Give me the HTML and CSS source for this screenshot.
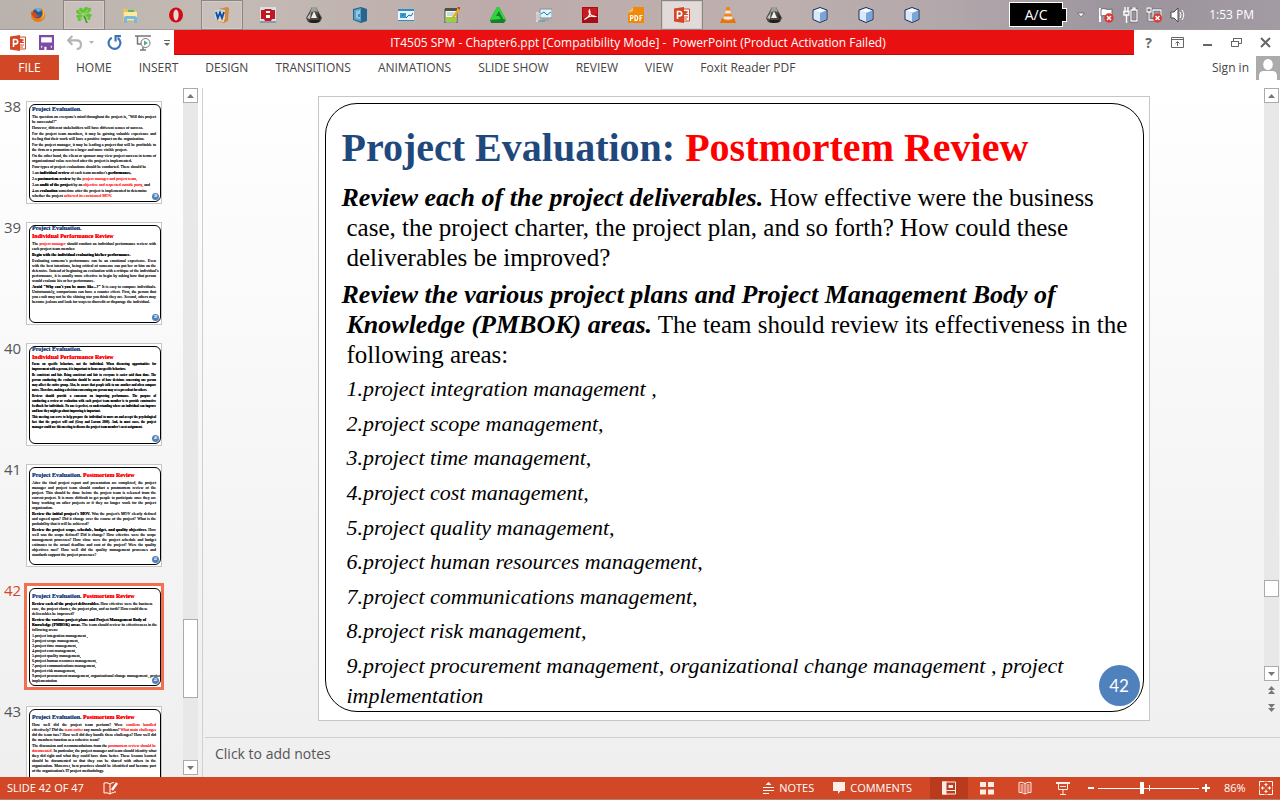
FILE: index.html
```html
<!DOCTYPE html>
<html lang="en">
<head>
<meta charset="utf-8">
<title>IT4505 SPM - Chapter6.ppt</title>
<link rel="stylesheet" href="styles.css">
</head>
<body>
<svg width="0" height="0" class="defs" aria-hidden="true">
  <defs>
    <symbol id="cube" viewBox="0 0 16 16"><path d="M8 .5 15 3v9.500L8 15.500 1 12.500V3Z" fill="#a9c8ec" stroke="#1c2c55"/><path d="M1.800 3.500 8 6v8.700L1.800 12Z" fill="#d9e9f8"/><path d="M14.200 3.500 8 6v8.700L14.200 12Z" fill="#7ba5d6"/><path d="M8 1.300 14 3.400 8 5.800 2 3.400Z" fill="#f4faff"/></symbol>
    <symbol id="tri" viewBox="0 0 16 16"><path d="M6 0h4l6 11-2 4q-6 2-12 0l-2-4Z" fill="#4a4946"/><path d="M6 0h4l2 5-4-1-4 2Z" fill="#a19f9a"/><path d="M8 4 5 11h6Z" fill="#f2f0eb"/><path d="M1 11l4-6-1 7Z" fill="#c4c1bb"/><path d="M4 13h8l2-1-1 3q-5 2-10 0Z" fill="#1f1e1c"/><path d="M12 6l3 5-2 1Z" fill="#222"/></symbol>
    <symbol id="ppt" viewBox="0 0 16 16"><path d="M8 2h7.500v12H8Z" fill="#fff" stroke="#d24726"/><path d="M10 5h4M10 7.500h4M10 10h4M10 12h3" stroke="#d24726"/><circle cx="11" cy="5.500" r="1.800" fill="#d24726"/><path d="M0 1.500 10 0v16L0 14.500Z" fill="#d24726"/><path d="M3.500 12V4.500h2a2.200 2.200 0 0 1 0 4.400h-2" fill="none" stroke="#fff" stroke-width="1.600"/></symbol>
    <symbol id="up" viewBox="0 0 7 4"><path d="M0 4 3.500 0 7 4Z" fill="currentColor"/></symbol>
    <symbol id="down" viewBox="0 0 7 4"><path d="M0 0h7L3.500 4Z" fill="currentColor"/></symbol>
  </defs>
</svg>

<header class="taskbar">
  <nav class="apps" aria-label="Running applications">
    <button aria-label="Firefox"><svg viewBox="0 0 16 16"><circle cx="8" cy="8" r="7" fill="#e8781c"/><circle cx="7.500" cy="6.500" r="4.800" fill="#245a9c"/><path d="M5 2c2-2 6-1 6 2L8 5Z" fill="#62b4e8"/><path d="M1 4c0 6 5 8 9 5l-3-1-2-3-3 1Z" fill="#d9480f"/><path d="M13 2c3 4 1 11-5 11 4 0 6-5 5-11Z" fill="#ffc933"/></svg></button>
    <button class="on" aria-label="Clover"><svg viewBox="0 0 16 16"><path d="M7 7Q1 8 0 5q0-3 3-2 0-3 3-2 2 2 1 6ZM8 7Q6 2 9 0q2-1 3 1 4-1 3 2-1 3-7 4ZM8 8q6-3 8 0 0 2-2 2 1 3-1 3-3-1-5-5ZM7 8q-1 6-4 6-2 0-1-3-3-1-1-3 2-1 6 0Z" fill="#63c436"/><path d="M7.500 7.500 11 16" stroke="#3f9a1e" stroke-width="1.600"/><path d="M3 4l9 7M12 3 4 12" stroke="#a9e780" stroke-width=".8"/></svg></button>
    <button aria-label="File Explorer"><svg viewBox="0 0 16 16"><path d="M1 2h5l1 1h7v11H1Z" fill="#e8c45c"/><path d="M2 5h13v8H2Z" fill="#fbe9a4"/><path d="M6 3h6v2H6Z" fill="#5cb85c"/><path d="M2 16V11q0-2 2-2h8q3 0 3 2v5h-3v-4H5v4Z" fill="#75b9e6"/></svg></button>
    <button aria-label="Opera"><svg viewBox="0 0 16 16"><ellipse cx="8" cy="8" rx="7" ry="7.500" fill="#d40b12"/><ellipse cx="8" cy="8" rx="2.600" ry="5.600" fill="#e5d9d9"/></svg></button>
    <button class="on" aria-label="Word"><svg viewBox="0 0 16 16"><path d="m4 2 9-2 2 1-1 13-4 2-7-2Z" fill="#d6893d"/><path d="m4 2 7 1-1 12-7-1Z" fill="#f4d5a2"/><path d="M1 3h10v9H1Z" fill="#bcd9ef"/><path d="m2 5 1.800 6L6 5.500 8 11l2-6" fill="none" stroke="#174a92" stroke-width="1.800"/></svg></button>
    <button aria-label="Dictionary"><svg viewBox="0 0 16 16"><path d="M0 0h16v14H0Z" fill="#d5e0e9"/><path d="M1 3h3l1-1h6l1 1h3v9h-3l-1 2H5l-1-2H1Z" fill="#c5151e"/><path d="M6 4h4v2H6Zm0 4h4v3H6Z" fill="#fff"/><path d="M0 14h16v2H0Z" fill="#8d9aa5"/></svg></button>
    <button aria-label="Disk tool"><svg><use href="#tri"/></svg></button>
    <button aria-label="Cabinet"><svg viewBox="0 0 16 16"><path d="m1 2 8-2 6 2v12l-6 2-8-3Z" fill="#28658e"/><path d="m2 3 7-2v13.500L2 12.500Z" fill="#5ba0c6"/><path d="m4 4 4-1v9L4 11Z" fill="#8fc9e4"/><path d="M7 7v3" stroke="#174562"/></svg></button>
    <button aria-label="Monitor"><svg viewBox="0 0 16 16"><path d="M0 2h16v12H0Z" fill="#e9f5fc"/><path d="M0 2h16v2H0Z" fill="#2e8dc4"/><path d="M2 6h6v5H2Z" fill="#3a9bd0"/><path d="m8 11 3-3 2 1 2-3M4 9l2-2" stroke="#226e9c" fill="none"/><path d="M0 13.500h16" stroke="#2e8dc4"/></svg></button>
    <button aria-label="Notepad"><svg viewBox="0 0 16 16"><path d="M1 2h12v14H1Z" fill="#f9faf5" stroke="#475147"/><path d="M1 1h12v3H1Z" fill="#495249"/><path d="M2 10h10v5H2Z" fill="#97cf45"/><path d="M3 6h7M3 8h6" stroke="#8bb" /><path d="M15 2 8 12" stroke="#e6ac21" stroke-width="2.500"/><path d="m14 0 2 2" stroke="#c33" stroke-width="2"/></svg></button>
    <button aria-label="Green triangle"><svg viewBox="0 0 16 16"><path d="M7 0h2l7 13-2 3H1l-1-3Z" fill="#16812a"/><path d="M7 0 0 13l11-1-2-3H6l3-5 4 8 3 1L9 0Z" fill="#2bd73a"/></svg></button>
    <button aria-label="Performance"><svg viewBox="0 0 16 16"><path d="M4 2h12v9H4Z" fill="#e9edef" stroke="#85949d"/><path d="M5 3h10v7H5Z" fill="#dff5ff"/><path d="m5 7 3-2 3 3 4-3" stroke="#197fa8" fill="none"/><path d="M7 12h6v2H7Z" fill="#9da6ab"/><path d="M1 5v10M0 6h3v8H0" stroke="#e1e6e8" fill="none"/><path d="M2 14h7" stroke="#3a9"/></svg></button>
    <button aria-label="Adobe Reader"><svg viewBox="0 0 16 16"><path d="M0 0h16v16H0Z" fill="#a80d11"/><path d="M1 1h14v6L1 11Z" fill="#ca1c20"/><path d="M2.500 12.500C7 11 9 6 7.500 3 6 5 9 10.500 13.500 9.500 10 8 5 10 2.500 12.500Z" fill="none" stroke="#fff" stroke-width="1.200"/></svg></button>
    <button aria-label="PDF viewer"><svg viewBox="0 0 16 16"><path d="M5 0h11v16H0V6Z" fill="#f08a0b"/><path d="M5 0v4L0 6Z" fill="#fac26d"/><path d="M2.500 14V8.500h1.200a1.300 1.300 0 0 1 0 2.800H2.500M7 8.500v5h.7q2 0 2-2.500t-2-2.500ZM12 14V8.500h2.500M12 11h2" stroke="#fff" fill="none" stroke-width="1.200"/></svg></button>
    <button class="on current" aria-label="PowerPoint"><svg><use href="#ppt"/></svg></button>
    <button aria-label="VLC"><svg viewBox="0 0 16 16"><path d="M2 11h12l2 5H0Z" fill="#e5750d"/><path d="M6.500 0h3L13 13q-5 2-10 0Z" fill="#f08219"/><path d="M5.700 3.500h4.600l.8 3H4.900ZM4 9.500h8l.6 2.200q-4.600 2-9.200 0Z" fill="#eee9e4"/></svg></button>
    <button aria-label="Disk tool 2"><svg><use href="#tri"/></svg></button>
    <button aria-label="VirtualBox"><svg><use href="#cube"/></svg></button>
    <button aria-label="VirtualBox 2"><svg><use href="#cube"/></svg></button>
    <button aria-label="VirtualBox 3"><svg><use href="#cube"/></svg></button>
  </nav>
  <div class="tray">
    <span class="battery">A/C</span>
    <svg class="s8" viewBox="0 0 8 6"><path d="M.5 1h7L4 4.800Z" fill="#fff" stroke="#555" stroke-width=".7"/></svg>
    <svg class="s16" viewBox="0 0 16 16"><path d="M2 1v14" stroke="#fff" stroke-width="2"/><path d="M3 2q3-1 5 0t6 0v7q-4 1-6 0t-5 0Z" fill="#fff" stroke="#555" stroke-width=".8"/><circle cx="11" cy="11" r="4.700" fill="#d83a33"/><path d="m9 9 4 4m0-4-4 4" stroke="#fff" stroke-width="1.500"/></svg>
    <svg class="s16" viewBox="0 0 16 16"><path d="M3 0v4M6 0v4M1 4.500h7M2 4v4h5V4M4.500 8v8" stroke="#fff" stroke-width="1.400" fill="none"/><path d="M9 3h6v11H9Zm2-2h2v2h-2Z" fill="none" stroke="#4d4949" stroke-width="2.400"/><path d="M9 3h6v11H9Zm2-2h2v2h-2Z" fill="none" stroke="#fff" stroke-width="1.400"/></svg>
    <svg class="s16" viewBox="0 0 16 16"><path d="M1 1h4v4H1Zm2 4v8h5M7 3h8v7H7Z" fill="none" stroke="#4d4949" stroke-width="2.400"/><path d="M1 1h4v4H1Zm2 4v8h5M7 3h8v7H7Z" fill="none" stroke="#fff" stroke-width="1.300"/><circle cx="11.500" cy="11" r="4.500" fill="#d83a33"/><path d="m9.500 9 4 4m0-4-4 4" stroke="#fff" stroke-width="1.500"/></svg>
    <svg class="s16" viewBox="0 0 16 16"><path d="M1 5h3l4-4v14l-4-4H1Z" fill="#fff" stroke="#4d4949"/><path d="M10 5q2 3 0 6M12 3q3.500 5 0 10" stroke="#fff" fill="none"/></svg>
    <time>1:53 PM</time>
  </div>
</header>

<div class="titlebar">
  <div class="quick">
    <svg class="s16" role="img" aria-label="PowerPoint"><use href="#ppt"/></svg>
    <button aria-label="Save"><svg class="s14" viewBox="0 0 14 14"><path d="M1 1h12v12H1Z" fill="none" stroke="#7d4aa5" stroke-width="2"/><path d="M1 7h12v3H1ZM3 10h8v4H3Z" fill="#7d4aa5"/><path d="M5 11h2v3H5Z" fill="#fff"/></svg></button>
    <button class="pair" aria-label="Undo"><svg class="s14" viewBox="0 0 14 14"><path d="M5 1 1 5l4 4M1.500 5H9q4 0 4 4t-4 4" fill="none" stroke="#b3b3b3" stroke-width="2"/></svg><svg class="caret" color="#b3b3b3"><use href="#down"/></svg></button>
    <button aria-label="Repeat"><svg class="s14" viewBox="0 0 14 14"><path d="M4.500 2.500A5.500 5.500 0 1 0 10 2.800" fill="none" stroke="#3b73b9" stroke-width="2"/><path d="M7 0h6v2H9v4H7Z" fill="#3b73b9"/></svg></button>
    <button aria-label="Start slide show"><svg class="s16" viewBox="0 0 16 16"><path d="M0 1h16M2.500 1v8H7M5 15h6M8 12v3" stroke="#777" stroke-width="1.500" fill="none"/><circle cx="10.500" cy="8" r="4.500" fill="#fff" stroke="#777"/><path d="M9 5.500v5L13 8Z" fill="#5aa883"/></svg></button>
    <button aria-label="Customize toolbar"><svg class="tiny" viewBox="0 0 6 6"><path d="M0 .5h6" stroke="#666"/><path d="M0 3h6L3 6Z" fill="#666"/></svg></button>
  </div>
  <h1>IT4505 SPM - Chapter6.ppt [Compatibility Mode] -&nbsp; PowerPoint (Product Activation Failed)</h1>
  <div class="win">
    <button aria-label="Help"><b>?</b></button>
    <button aria-label="Ribbon options"><svg viewBox="0 0 13 11"><path d="M.5.500h12v10H.5ZM1 2.500h11" fill="none" stroke="#666"/><path d="M6.500 9V5M4.500 6.500l2-2 2 2" stroke="#666" fill="none"/></svg></button>
    <button aria-label="Minimize"><svg viewBox="0 0 13 11"><path d="M2 8h9" stroke="#666" stroke-width="2"/></svg></button>
    <button aria-label="Restore"><svg viewBox="0 0 13 11"><path d="M1.500 4.500h7v5h-7ZM1 4.500h8M3.500 4V1.500h8v5H9M3 1.500h9" fill="none" stroke="#666"/></svg></button>
    <button aria-label="Close"><svg viewBox="0 0 13 11"><path d="m2 1 9 9m0-9-9 9" stroke="#666" stroke-width="2"/></svg></button>
  </div>
</div>

<nav class="ribbon">
  <button class="file">FILE</button>
  <div class="tabs"><button>HOME</button><button>INSERT</button><button>DESIGN</button><button>TRANSITIONS</button><button>ANIMATIONS</button><button>SLIDE SHOW</button><button>REVIEW</button><button>VIEW</button><button>Foxit Reader PDF</button></div>
  <a class="signin" href="#">Sign in</a>
  <svg class="avatar" viewBox="0 0 24 24"><path d="M0 0h24v24H0Z" fill="#ababab"/><ellipse cx="12" cy="8.500" rx="4.800" ry="5.500" fill="#fff"/><path d="M3 24v-4q0-5 5-5h8q5 0 5 5v4Z" fill="#fff"/></svg>
</nav>

<main>
  <aside>
    <ol class="thumbs">
      <li><span class="num">38</span><div class="thumb"><div class="mini high">
        <h3>Project Evaluation.</h3>
        <p><span>The question on everyone's mind throughout the project is, "Will this project</span><span>be successful?"</span></p>
        <p><span>However, different stakeholders will have different senses of success.</span></p>
        <p><span>For the project team members, it may be gaining valuable experience and</span><span>feeling that their work will have a positive impact on the organization.</span></p>
        <p><span>For the project manager, it may be leading a project that will be profitable to</span><span>the firm or a promotion to a larger and more visible project.</span></p>
        <p><span>On the other hand, the client or sponsor may view project success in terms of</span><span>organizational value received after the project is implemented.</span></p>
        <p><span>Four types of project evaluations should be conducted. There should be</span></p>
        <p><span>1.an <b>individual review</b> of each team member's <b>performance,</b></span></p>
        <p><span>2.a <b>postmortem review</b> by the <em>project manager and project team,</em></span></p>
        <p><span>3.an <b>audit of the project</b> by an <em>objective and respected outside party,</em> and</span></p>
        <p><span class="left-end">4.an <b>evaluation</b> sometime after the project is implemented to determine</span><span>whether the project <em>achieved its envisioned MOV.</em></span></p>
        <i class="dot">38</i></div></div></li>
      <li><span class="num">39</span><div class="thumb"><div class="mini top">
        <h3>Project Evaluation.<br><em>Individual Performance Review</em></h3>
        <p><span>The <em>project manager</em> should conduct an individual performance review with</span><span>each project team member.</span></p>
        <p><span><b>Begin with the individual evaluating his/her performance.</b></span></p>
        <p><span>Evaluating someone's performance can be an emotional experience. Even</span><span>with the best intentions, being critical of someone can put her or him on the</span><span>defensive. Instead of beginning an evaluation with a critique of the individual's</span><span>performance, it is usually more effective to begin by asking how that person</span><span>would evaluate his or her performance.</span></p>
        <p><span><b>Avoid "Why can't you be more like...?"</b> It is easy to compare individuals.</span><span>Unfortunately, comparisons can have a counter effect. First, the person that</span><span>you exalt may not be the shining star you think they are. Second, others may</span><span>become jealous and look for ways to discredit or disparage the individual.</span></p>
        <i class="dot">39</i></div></div></li>
      <li><span class="num">40</span><div class="thumb"><div class="mini top fine">
        <h3>Project Evaluation.<br><em>Individual Performance Review</em></h3>
        <p><span>Focus on specific behaviors, not the individual. When discussing opportunities for</span><span>improvement with a person, it is important to focus on specific behaviors.</span></p>
        <p><span>Be consistent and fair. Being consistent and fair to everyone is easier said than done. The</span><span>person conducting the evaluation should be aware of how decisions concerning one person</span><span>may affect the entire group. Also, be aware that people talk to one another and often compare</span><span>notes. Therefore, making a decision concerning one person may set a precedent for others.</span></p>
        <p><span>Reviews should provide a consensus on improving performance. The purpose of</span><span>conducting a review or evaluation with each project team member is to provide constructive</span><span>feedback for individuals. No one is perfect, so understanding where an individual can improve</span><span>and how they might go about improving is important.</span></p>
        <p><span>This meeting can serve to help prepare the individual to move on and accept the psychological</span><span>fact that the project will end (Gray and Larson 2000). And, in most cases, the project</span><span>manager could use this meeting to discuss the project team member's next assignment.</span></p>
        <i class="dot">40</i></div></div></li>
      <li><span class="num">41</span><div class="thumb"><div class="mini">
        <h3>Project Evaluation. <em>Postmortem Review</em></h3>
        <p><span>After the final project report and presentation are completed, the project</span><span>manager and project team should conduct a postmortem review of the</span><span>project. This should be done before the project team is released from the</span><span>current project. It is more difficult to get people to participate once they are</span><span>busy working on other projects or if they no longer work for the project</span><span>organization.</span></p>
        <p><span><b>Review the initial project's MOV.</b> Was the project's MOV clearly defined</span><span>and agreed upon? Did it change over the course of the project? What is the</span><span>probability that it will be achieved?</span></p>
        <p><span><b>Review the project scope, schedule, budget, and quality objectives.</b> How</span><span>well was the scope defined? Did it change? How effective were the scope</span><span>management processes? How close were the project schedule and budget</span><span>estimates to the actual deadline and cost of the project? Were the quality</span><span>objectives met? How well did the quality management processes and</span><span>standards support the project processes?</span></p>
        <i class="dot">41</i></div></div></li>
      <li class="selected"><span class="num">42</span><div class="thumb"><div class="mini loose">
        <h3>Project Evaluation. <em>Postmortem Review</em></h3>
        <p class="rag"><span><b>Review each of the project deliverables.</b> How effective were the business</span><span>case, the project charter, the project plan, and so forth? How could these</span><span>deliverables be improved?</span></p>
        <p class="rag"><span><b>Review the various project plans and Project Management Body of</b></span><span><b>Knowledge (PMBOK) areas.</b> The team should review its effectiveness in the</span><span>following areas:</span></p>
        <p><span>1.project integration management ,</span></p><p><span>2.project scope management,</span></p><p><span>3.project time management,</span></p><p><span>4.project cost management,</span></p><p><span>5.project quality management,</span></p><p><span>6.project human resources management,</span></p><p><span>7.project communications management,</span></p><p><span>8.project risk management,</span></p>
        <p class="last"><span class="left-end">9.project procurement management, organizational change management , project</span><span>implementation</span></p>
        <i class="dot">42</i></div></div></li>
      <li><span class="num">43</span><div class="thumb"><div class="mini">
        <h3>Project Evaluation. <em>Postmortem Review</em></h3>
        <p class="light"><span><b>How well did the project team perform?</b> Were <em>conflicts handled</em></span><span><b>effectively?</b> Did the <em>team suffer</em> any morale problems? <em>What main challenges</em></span><span>did the team face? How well did they handle these challenges? How well did</span><span>the members function as a cohesive team?</span></p>
        <p class="light"><span>The discussion and recommendations from the <em>postmortem review should be</em></span><span><em>documented.</em> In particular, the project manager and team should identify what</span><span>they did right and what they could have done better. These lessons learned</span><span>should be documented so that they can be shared with others in the</span><span>organization. Moreover, best practices should be identified and become part</span><span>of the organization's IT project methodology.</span></p>
        </div></div></li>
    </ol>
    <div class="scroll left"><button aria-label="Scroll up"><svg><use href="#up"/></svg></button><div class="track"><i class="knob"></i></div><button aria-label="Scroll down"><svg><use href="#down"/></svg></button></div>
  </aside>

  <section class="editor">
    <div class="stage">
      <article class="slide"><div class="frame">
        <h2>Project Evaluation: <em>Postmortem Review</em></h2>
        <p><b>Review each of the project deliverables.</b> How effective were the business<br>case, the project charter, the project plan, and so forth? How could these<br>deliverables be improved?</p>
        <p><b>Review the various project plans and Project Management Body of<br>Knowledge (PMBOK) areas.</b> The team should review its effectiveness in the<br>following areas:</p>
        <ul>
          <li>1.project integration management ,</li><li>2.project scope management,</li><li>3.project time management,</li><li>4.project cost management,</li><li>5.project quality management,</li><li>6.project human resources management,</li><li>7.project communications management,</li><li>8.project risk management,</li><li>9.project procurement management, organizational change management , project<br>implementation</li>
        </ul>
        <span class="page">42</span>
      </div></article>
      <div class="scroll right"><button aria-label="Previous"><svg><use href="#up"/></svg></button><div class="track"><i class="knob"></i></div><button aria-label="Next"><svg><use href="#down"/></svg></button>
        <button class="jump" aria-label="Previous slide"><svg><use href="#up"/></svg><svg><use href="#up"/></svg></button><button class="jump" aria-label="Next slide"><svg><use href="#down"/></svg><svg><use href="#down"/></svg></button></div>
    </div>
    <div class="notes">Click to add notes</div>
  </section>
</main>

<footer>
  <span>SLIDE 42 OF 47</span>
  <button class="spell" aria-label="Spelling"><svg class="s16" viewBox="0 0 16 14"><path d="M7 13V3Q4 1 1 2v10q3-1 6 1 2-1.500 4-1.500M7 3q2-1.500 4-1.500M12 12v-2" fill="none" stroke="#fff"/><path d="m9 9 5-7" stroke="#fff" stroke-width="2.400"/></svg></button>
  <div class="tools">
    <button><svg class="s11" viewBox="0 0 11 12"><path d="M0 5.500h11M0 8.500h11M0 11.500h6" stroke="#fff"/><path d="m5.500 0 3 3h-6Z" fill="#fff"/></svg>NOTES</button>
    <button><svg class="s12" viewBox="0 0 12 12"><path d="M0 0h12v9H7.500L5 12V9H0Z" fill="#fdeee9"/></svg>COMMENTS</button>
  </div>
  <div class="views">
    <button class="active" aria-label="Normal"><svg viewBox="0 0 14 14"><path d="M.5 1h13v12H.5ZM4.500 9.500h9" fill="none" stroke="#fdeee9"/><path d="M0 .5h4.500v13H0ZM6.500 4H11v3H6.500Z" fill="#fdeee9"/></svg></button>
    <button aria-label="Slide sorter"><svg viewBox="0 0 14 14"><path d="M0 1h6v5H0Zm8 0h6v5H8ZM0 8.500h6v5H0Zm8 0h6v5H8Z" fill="#fdeee9"/></svg></button>
    <button aria-label="Reading view"><svg viewBox="0 0 14 14"><path d="M7 2.500Q4 .5 1 1.500v10q3-.5 6 1.500 3-2 6-1.500v-10q-3-1-6 1ZM7 2v11M2.500 4H5.500M2.500 6H5.500M2.500 8H5.500M2.500 10H5.500M8.500 4H11.500M8.500 6H11.500M8.500 8H11.500M8.500 10H11.500" fill="none" stroke="#fdeee9"/></svg></button>
    <button aria-label="Slide show"><svg viewBox="0 0 14 14"><path d="M0 2h14" stroke="#fdeee9" stroke-width="2"/><path d="M2.500 3v5.500h9V3M4 5.500h6M7 9v4M4 13.500h6" fill="none" stroke="#fdeee9"/></svg></button>
  </div>
  <div class="zoom">
    <button aria-label="Zoom out"><svg viewBox="0 0 8 8"><path d="M1 4h6" stroke="#fff" stroke-width="2"/></svg></button>
    <input type="range" min="0" max="100" value="43" aria-label="Zoom">
    <button aria-label="Zoom in"><svg viewBox="0 0 8 8"><path d="M0 4h8M4 0v8" stroke="#fff" stroke-width="2"/></svg></button>
  </div>
  <span class="pct">86%</span>
  <button class="fit" aria-label="Fit slide"><svg viewBox="0 0 14 14"><path d="M.5.500h13v13H.5Z" fill="none" stroke="#fff" stroke-dasharray="5 1 1 1 5 0"/><path d="M7 2v3.500M7 8.500V12M2 7h3.500M8.500 7H12M5.500 3.500h3M5.500 10.500h3M3.500 5.500v3M10.500 5.500v3" stroke="#fff"/></svg></button>
</footer>
</body>
</html>
```
FILE: styles.css
```css
* { box-sizing: border-box; }
body { margin: 0; height: 100vh; display: flex; flex-direction: column; overflow: hidden; font: 12px/16px "Open Sans", "Noto Sans", sans-serif; color: #444; background: #fff; }
button { font: inherit; color: inherit; background: none; border: 0; padding: 0; display: flex; align-items: center; justify-content: center; }
svg { display: block; flex: none; }
h1, h2, h3, p, ul, ol { margin: 0; padding: 0; }
em { color: #f00; font-style: inherit; }
.defs { position: absolute; }
.s16 { width: 16px; height: 16px; }
.s14 { width: 15px; height: 15px; }
.s12 { width: 12px; height: 12px; }
.s11 { width: 11px; height: 12px; }
.s8 { width: 8px; height: 6px; margin-right: 5px; }
.tiny { width: 6px; height: 6px; }

.taskbar { flex: none; height: 30px; display: flex; justify-content: space-between; padding-left: 17px; background: linear-gradient(90deg, #b9b1ab 0, #c4bbb5 18%, #bcabaa 38%, #beb0ae 60%, #b1a6aa 75%, #9b949d 88%, #a29ba4 100%); border-bottom: 1px solid #a39b9a; }
.apps { display: flex; gap: 4px; }
.apps button { width: 42px; height: 30px; }
.apps svg { width: 16px; height: 16px; }
.apps .on { background: #c9bfbb; border: 1px solid #8e8583; box-shadow: inset 0 0 0 1px #d3cbc8; }
.apps .current { background: #e2dad8; }
.tray { display: flex; align-items: center; gap: 8px; padding-right: 26px; color: #fff; }
.battery { position: relative; width: 54px; height: 25px; margin-right: 6px; border: 1px solid #fff; background: #000; font-size: 14px; line-height: 24px; text-align: center; }
.battery::after { content: ""; position: absolute; left: 52px; top: 5px; width: 4px; height: 12px; background: #000; border: solid #fff; border-width: 1px 1px 1px 0; }
.tray time { padding-left: 15px; }

.titlebar { flex: none; height: 25px; display: flex; }
.quick { width: 174px; display: flex; align-items: center; padding-left: 10px; gap: 13px; }
.pair { gap: 7px; }
.caret { width: 5px; height: 3px; }
.titlebar h1 { flex: 1; background: #e81010; border-bottom: 1px solid #b80d0d; color: #fff; padding-right: 32px; font-size: 12px; line-height: 25px; font-weight: 400; text-align: center; }
.win { width: 146px; display: flex; justify-content: space-between; padding: 0 8px; color: #666; }
.win svg { width: 13px; height: 11px; }
.win b { font-size: 14px; width: 13px; }

.ribbon { flex: none; height: 25px; display: flex; align-items: center; }
.file { width: 59px; height: 25px; background: #d24726; color: #fff; }
.tabs { display: flex; gap: 27px; padding-left: 17px; flex: 1; }
.signin { color: #444; text-decoration: none; margin-right: 7px; }
.avatar { width: 24px; height: 24px; }

main { flex: 1; min-height: 0; display: flex; padding-top: 8px; background: linear-gradient(#fff 0, #efefef 100%); }
aside { width: 203px; flex: none; display: flex; border-right: 1px solid #cfcfcf; padding-right: 4px; }
.thumbs { flex: 1; display: flex; flex-direction: column; gap: 18px; padding: 13px 0 0 4px; list-style: none; overflow: hidden; }
.thumbs li { display: flex; gap: 4px; }
.num { width: 18px; font-size: 15px; line-height: 10px; color: #555; }
.thumb { width: 136px; height: 103px; border: 1px solid #c6c6c6; background: #fff; padding: 2px; font: 4px/5px "Liberation Serif", serif; color: #000; }
.mini { position: relative; height: 98px; width: 132px; border: 1px solid #000; border-radius: 6px; padding: 2px 4px 0 2px; overflow: hidden; white-space: nowrap; text-shadow: 0 0 0 currentColor; }
.mini.high, .mini.top { padding-top: 0; }
.mini.high h3 { margin-top: -1px; }
.mini.top h3 { margin-top: -3px; }
.mini h3 { color: #1f497d; font-size: 6px; line-height: 8px; padding: 1px 0; }
.mini p { padding-bottom: 1px; }
.mini.loose p { padding-bottom: 0; }
.mini.loose .rag { padding-bottom: 1px; }
.mini.fine p { font-size: 3px; font-weight: 700; }
.mini span { display: block; text-align-last: justify; }
.mini span:last-of-type, .mini .rag span, .mini .left-end { text-align-last: left; }
.mini .light b { font-weight: 400; }
.dot { position: absolute; right: 1px; bottom: 1px; width: 7px; height: 7px; border-radius: 50%; background: #4f81bd; color: #fff; font-size: 3px; font-style: normal; line-height: 7px; text-align: center; }
.selected .num { color: #d24726; }
.selected .thumb { outline: 3px solid #f0704f; outline-offset: -1px; }

.scroll { width: 15px; display: flex; flex-direction: column; color: #777; }
.scroll button { width: 15px; height: 15px; background: #fff; border: 1px solid #ababab; }
.scroll button svg { width: 7px; height: 4px; }
.track { flex: 1; background: #e8e8e8; display: flex; flex-direction: column; }
.knob { background: #fff; border: 1px solid #ababab; }
.left { padding-bottom: 2px; }
.left .knob { height: 79px; margin: auto 0 62px; }
.right .knob { height: 17px; margin: auto 0 69px; }
.scroll .jump { flex-direction: column; border: 0; background: none; height: 18px; }

.editor { flex: 1; min-width: 0; display: flex; flex-direction: column; }
.stage { flex: 1; min-height: 0; display: flex; justify-content: space-between; }
.slide { height: 625px; aspect-ratio: 832 / 625; margin: 8px auto 0; border: 1px solid #c6c6c6; background: #fff; padding: 6px 5px 8px 6px; }
.frame { position: relative; height: 100%; border: 1px solid #000; border-radius: 32px; padding: 20px 0 0 21px; display: flex; flex-direction: column; font: 25px/30px "Liberation Serif", serif; color: #000; white-space: nowrap; }
.frame h2 { color: #1f497d; font-size: 40px; line-height: 48px; margin: 0 0 11px -5px; }
.frame p { margin-bottom: 7px; text-indent: -5px; }
.frame p + p { margin-bottom: 4px; }
.frame b { font-style: italic; font-size: 26px; line-height: 26px; }
.frame ul { flex: 1; display: flex; flex-direction: column; justify-content: space-between; list-style: none; font-size: 22px; font-style: italic; }
.frame li { line-height: 30px; }
.page { position: absolute; right: 3px; bottom: 5px; width: 41px; height: 41px; border-radius: 50%; background: #4f81bd; color: #fff; font: 17px/42px Lato, sans-serif; text-align: center; }
.right { margin-right: 1px; padding-bottom: 20px; }
.notes { height: 40px; margin-left: 2px; padding-left: 10px; border-top: 1px solid #cfcfcf; font-size: 14px; line-height: 32px; color: #555; }

footer { flex: none; height: 23px; display: flex; align-items: center; background: #d24726; color: #fff; padding: 0 7px; border-bottom: 1px solid #b3806f; font-size: 11px; }
.spell { margin-left: 19px; }
.tools { margin-left: auto; display: flex; gap: 19px; }
.tools button { gap: 5px; }
.views { display: flex; margin-left: 18px; }
.views button { width: 38px; height: 22px; }
.views svg, .fit svg { width: 14px; height: 14px; }
.views .active { background: #b93a1c; }
.zoom { display: flex; align-items: center; gap: 3px; margin-left: 5px; }
.zoom svg { width: 8px; height: 8px; }
.zoom input { appearance: none; width: 101px; height: 16px; margin: 0; background: linear-gradient(#fff, #fff) center / 100% 1px no-repeat, linear-gradient(#fff, #fff) 51px 5px / 1px 6px no-repeat; }
.zoom input::-webkit-slider-thumb { appearance: none; width: 4px; height: 12px; background: #fff; }
.pct { width: 22px; margin: 0 13px 0 14px; }
```
